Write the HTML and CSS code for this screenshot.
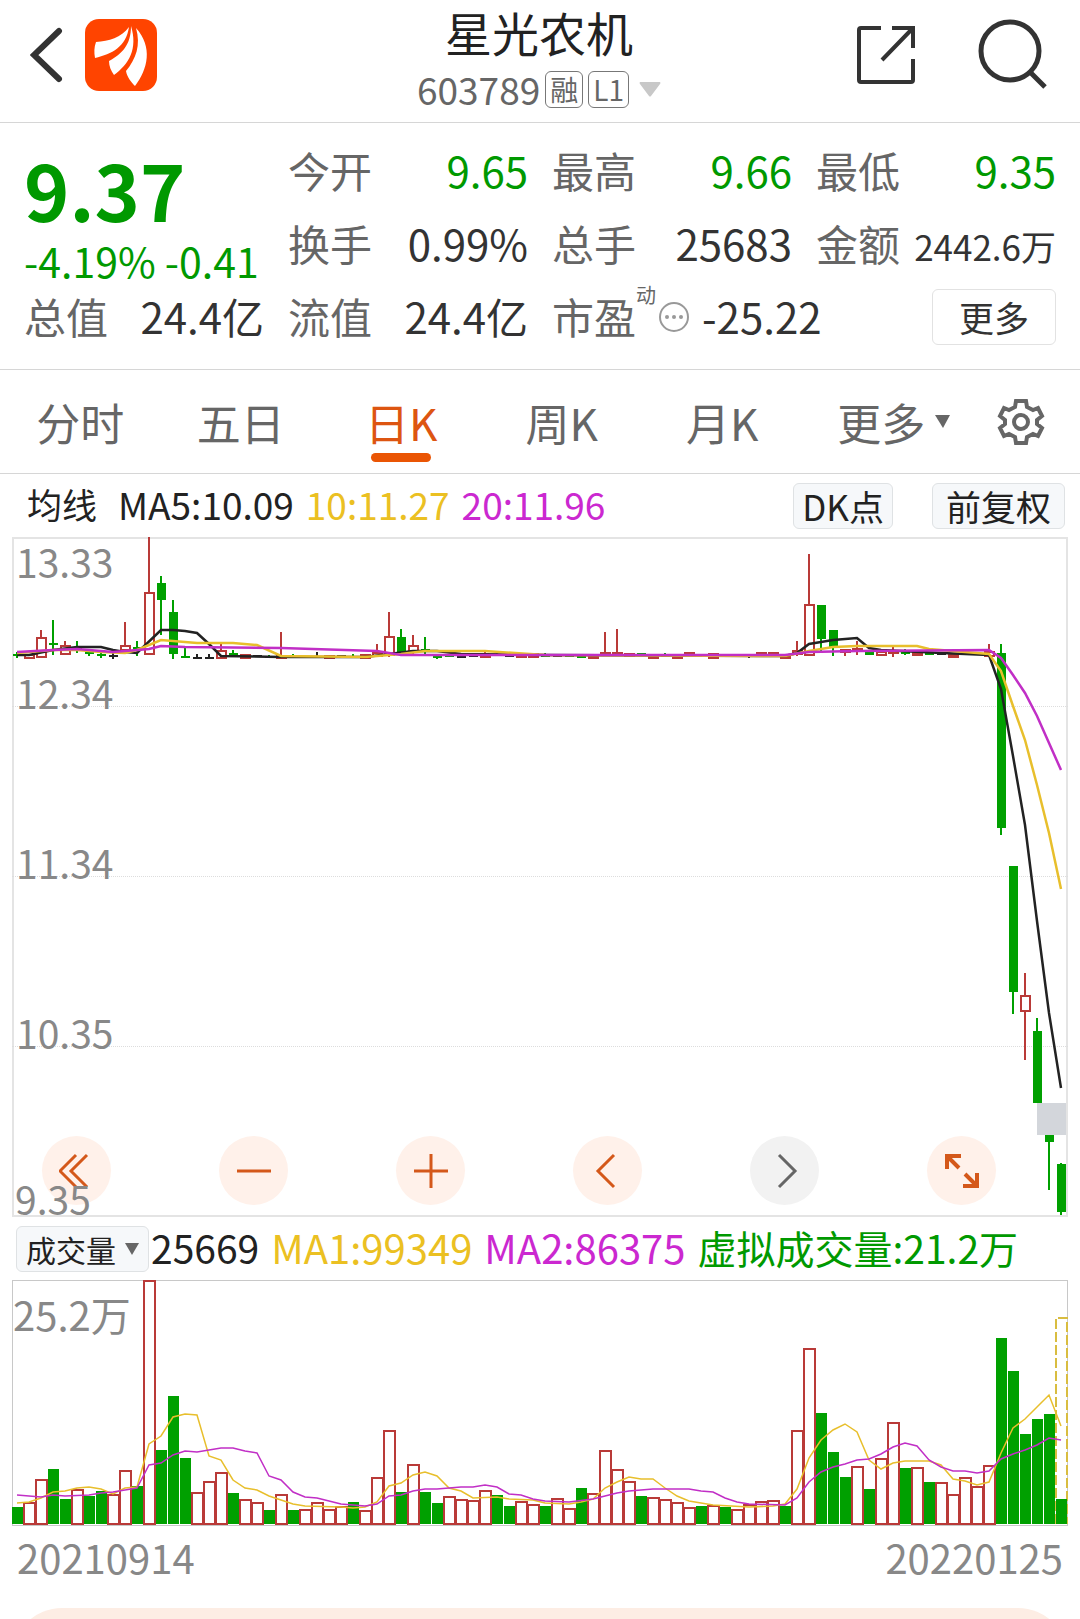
FILE: index.html
```
<!DOCTYPE html>
<html lang="zh-CN">

<head>
  <meta charset="utf-8">
  <meta name="viewport" content="width=device-width, initial-scale=1">
  <title>星光农机 603789</title>
  <link rel="stylesheet" href="styles.css">
</head>

<body>
  <header class="top-bar">
    <div class="top-left">
      <button class="icon-btn" aria-label="返回">
        <svg width="34" height="56" viewBox="0 0 34 56"><path d="M29 4 4 28 29 52" fill="none" stroke="#333" stroke-width="6" stroke-linecap="round" stroke-linejoin="miter"/></svg>
      </button>
      <a class="logo" href="#" aria-label="首页">
        <svg width="72" height="72" viewBox="0 0 72 72">
          <rect width="72" height="72" rx="14" fill="#ff4400"/>
          <path d="M44 8C36 19 24 22 11 23 9 28 9 34 10 39 27 35 41 28 44 8Z" fill="#fff"/>
          <path d="M46 7C46 26 37 35 24 42 24 47 26 52 29 56 44 45 53 30 46 7Z" fill="#fff"/>
          <path d="M51 9C56 26 51 40 41 52 42 58 46 63 50 67 63 50 68 28 51 9Z" fill="#fff"/>
        </svg>
      </a>
    </div>
    <div class="stock">
      <h1>星光农机</h1>
      <div class="stock-code">
        <span>603789</span>
        <span class="tag">融</span>
        <span class="tag">L1</span>
        <svg class="code-arrow" width="22" height="15" viewBox="0 0 22 15"><path d="M1 0h20q1 1 0 2L12 14q-1 1-2 0L1 2q-1-1 0-2z" fill="#c8c8c8"/></svg>
      </div>
    </div>
    <div class="top-right">
      <button class="icon-btn" aria-label="分享">
        <svg width="60" height="60" viewBox="0 0 60 60" fill="none" stroke="#333" stroke-width="4"><path d="M25 3H5Q3 3 3 5V55Q3 57 5 57H55Q57 57 57 55V34M36 3H57V23M57 3 26 35"/></svg>
      </button>
      <button class="icon-btn" aria-label="搜索">
        <svg width="70" height="72" viewBox="0 0 70 72" fill="none" stroke="#333" stroke-width="5"><circle cx="32" cy="32" r="29"/><path d="M52 53 67 68"/></svg>
      </button>
    </div>
  </header>

  <section class="quote">
    <div class="price">
      <strong>9.37</strong>
      <span>-4.19% -0.41</span>
    </div>
    <div class="cell"><span>今开</span><b class="down">9.65</b></div>
    <div class="cell"><span>最高</span><b class="down">9.66</b></div>
    <div class="cell"><span>最低</span><b class="down">9.35</b></div>
    <div class="cell"><span>换手</span><b>0.99%</b></div>
    <div class="cell"><span>总手</span><b>25683</b></div>
    <div class="cell"><span>金额</span><b class="small">2442.6万</b></div>
    <div class="cell"><span>总值</span><b>24.4亿</b></div>
    <div class="cell"><span>流值</span><b>24.4亿</b></div>
    <div class="cell pe">
      <span>市盈</span><sup>动</sup>
      <svg width="32" height="32" viewBox="0 0 32 32"><circle cx="16" cy="16" r="14" fill="none" stroke="#999" stroke-width="2"/><g fill="#999"><circle cx="9" cy="16" r="2"/><circle cx="16" cy="16" r="2"/><circle cx="23" cy="16" r="2"/></g></svg>
      <b>-25.22</b>
      <button class="more-btn">更多</button>
    </div>
  </section>

  <nav class="tabs">
    <button>分时</button>
    <button>五日</button>
    <button class="active">日K</button>
    <button>周K</button>
    <button>月K</button>
    <button class="has-arrow">更多<svg width="15" height="13" viewBox="0 0 15 13"><path d="M0 0H15L8 13Z" fill="#666"/></svg></button>
    <button class="gear" aria-label="设置">
      <svg width="48" height="48" viewBox="0 0 48 48" fill="none" stroke="#666" stroke-width="4">
        <path d="M19 3H29L30 9 36 12 41 10 45 18 40 22V26L45 30 41 38 36 36 30 39 29 45H19L18 39 12 36 7 38 3 30 8 26V22L3 18 7 10 12 12 18 9Z"/>
        <circle cx="24" cy="24" r="7"/>
      </svg>
    </button>
  </nav>

  <div class="legend">
    <span class="legend-name">均线</span>
    <span>MA5:10.09</span>
    <span class="yellow">10:11.27</span>
    <span class="purple">20:11.96</span>
    <button class="chip push">DK点</button>
    <button class="chip">前复权</button>
  </div>

  <div class="plot k-plot">
    <div class="scale">
      <div><span>13.33</span><span>12.34</span></div>
      <div><span>11.34</span></div>
      <div><span>10.35</span></div>
      <div></div>
    </div>
    <svg id="kChart" viewBox="0 0 1056 680" preserveAspectRatio="none"></svg>
    <div class="tools">
      <button aria-label="最早"><svg viewBox="0 0 36 36"><path d="M17 2 1 18 17 34M28 2 12 18 28 34"/></svg></button>
      <button aria-label="缩小"><svg viewBox="0 0 36 36"><path d="M1 18H35"/></svg></button>
      <button aria-label="放大"><svg viewBox="0 0 36 36"><path d="M1 18H35M18 1V35"/></svg></button>
      <button aria-label="向左"><svg viewBox="0 0 36 36"><path d="M24 2 8 18 24 34"/></svg></button>
      <button class="disabled" aria-label="向右"><svg viewBox="0 0 36 36"><path d="M12 2 28 18 12 34"/></svg></button>
      <button aria-label="全屏"><svg viewBox="0 0 36 36"><path d="M3 16V3H17M3 3 15 15M33 20V33H19M33 33 21 21" stroke-width="4"/></svg></button>
    </div>
    <span class="low-label">9.35</span>
  </div>

  <div class="legend vol-legend">
    <button class="chip vol-chip">成交量<svg width="14" height="12" viewBox="0 0 14 12"><path d="M0 0H14L7 12Z" fill="#666"/></svg></button>
    <span>25669</span>
    <span class="yellow">MA1:99349</span>
    <span class="purple">MA2:86375</span>
    <span class="down">虚拟成交量:21.2万</span>
  </div>

  <div class="plot vol-plot">
    <span class="vol-max">25.2万</span>
    <svg id="volChart" viewBox="0 0 1056 246" preserveAspectRatio="none"></svg>
  </div>

  <div class="dates">
    <span>20210914</span>
    <span>20220125</span>
  </div>

  <div class="sheet"><div class="sheet-body"></div></div>

  <script src="chart.js"></script>
</body>

</html>
```
FILE: styles.css
```
* {
  box-sizing: border-box;
}

body {
  margin: 0;
  height: 100vh;
  display: flex;
  flex-direction: column;
  overflow-x: hidden;
  background: #fff;
  color: #222;
  font-family: "Noto Sans CJK SC", "Noto Sans", sans-serif;
}

button {
  font-family: inherit;
  color: inherit;
  border: 0;
  padding: 0;
  background: none;
  cursor: pointer;
}

svg {
  display: block;
  flex: none;
}

.down {
  color: #009900;
}

.yellow {
  color: #ebc022;
}

.purple {
  color: #cb28d0;
}

/* header */
.top-bar {
  flex: none;
  display: grid;
  grid-template-columns: 1fr auto 1fr;
  height: 123px;
  padding: 0 32px 0 30px;
  border-bottom: 1px solid #d6d6d6;
}

.top-left,
.top-right {
  display: flex;
  align-items: center;
  height: 110px;
}

.top-left {
  gap: 21px;
}

.top-right {
  justify-content: flex-end;
  gap: 62px;
}

.stock {
  text-align: center;
}

.stock h1 {
  margin: 0;
  font-size: 47px;
  line-height: 63px;
  font-weight: 400;
}

.stock-code {
  display: flex;
  align-items: center;
  justify-content: center;
  gap: 5px;
  height: 52px;
  font-size: 37px;
  line-height: 50px;
  color: #666;
}

.tag {
  min-width: 37px;
  height: 37px;
  padding: 0 4px;
  border: 1px solid #777;
  border-radius: 6px;
  font-size: 28px;
  line-height: 34px;
}

.code-arrow {
  margin-left: 5px;
}

/* quote numbers */
.quote {
  flex: none;
  display: grid;
  grid-template-columns: repeat(4, 1fr);
  grid-auto-rows: 73px;
  column-gap: 24px;
  height: 247px;
  padding: 10px 24px 0;
  border-bottom: 1px solid #d6d6d6;
  font-size: 42px;
  line-height: 73px;
}

.price {
  grid-row: span 2;
  display: flex;
  flex-direction: column;
  padding-top: 4px;
  color: #009900;
  white-space: nowrap;
}

.price strong {
  font-size: 77px;
  line-height: 104px;
  font-weight: 700;
}

.price span {
  font-size: 41px;
  line-height: 38px;
}

.cell {
  display: flex;
  align-items: baseline;
  justify-content: space-between;
  white-space: nowrap;
  color: #666;
}

.cell b {
  font-weight: 400;
  color: #333;
}

.cell b.down {
  color: #009900;
}

.cell b.small {
  font-size: 35px;
}

.pe {
  grid-column: span 2;
  justify-content: flex-start;
}

.pe sup {
  align-self: flex-start;
  padding-right: 2px;
  font-size: 20px;
  line-height: 32px;
}

.pe svg,
.more-btn {
  align-self: center;
  margin-top: 3px;
}

.pe b {
  margin-left: 12px;
}

.more-btn {
  width: 124px;
  height: 56px;
  margin-left: auto;
  border: 1px solid #e2e2e2;
  border-radius: 6px;
  font-size: 35px;
  line-height: 48px;
  color: #333;
}

/* period tabs */
.tabs {
  flex: none;
  display: grid;
  grid-template-columns: repeat(6, 1fr) 117px;
  height: 104px;
  border-bottom: 1px solid #d6d6d6;
}

.tabs button {
  position: relative;
  font-size: 44px;
  line-height: 60px;
  color: #666;
}

.tabs .active {
  color: #dd5511;
}

.tabs .active::after {
  content: "";
  position: absolute;
  left: 50%;
  bottom: 11px;
  width: 60px;
  height: 9px;
  margin-left: -30px;
  border-radius: 5px;
  background: #ea5504;
}

.tabs .has-arrow {
  display: flex;
  align-items: center;
  justify-content: center;
  gap: 10px;
  padding-left: 22px;
}

.tabs .gear {
  padding-left: 34px;
}

/* legend lines above the charts */
.legend {
  flex: none;
  display: flex;
  align-items: center;
  gap: 12px;
  height: 63px;
  padding: 0 15px 3px 27px;
  font-size: 37px;
  line-height: 46px;
  white-space: nowrap;
}

.legend-name {
  margin-right: 9px;
  font-size: 35px;
}

.chip {
  height: 46px;
  margin-top: 3px;
  padding: 0 8px;
  border: 1px solid #dfe2e4;
  border-radius: 6px;
  background: #f6f8fa;
  font-size: 35px;
  line-height: 40px;
}

.push {
  margin-left: auto;
  margin-right: 27px;
}

.chip:last-child {
  padding: 0 13px;
}

.vol-legend {
  padding-left: 16px;
  font-size: 39px;
}

.vol-chip {
  display: flex;
  align-items: center;
  gap: 9px;
  margin-right: -10px;
  padding: 0 9px;
  font-size: 30px;
}

.vol-legend .yellow,
.vol-legend .purple {
  font-size: 40px;
}

/* charts */
.plot {
  position: relative;
  flex: none;
  margin: 0 12px;
  color: #888;
}

.plot > svg {
  position: relative;
  width: 100%;
  height: 100%;
}

.k-plot {
  height: 680px;
  box-shadow: inset 0 0 0 2px #e4e4e4;
}

.scale {
  position: absolute;
  inset: 0;
  display: grid;
  grid-template-rows: repeat(4, 1fr);
  font-size: 39px;
  line-height: 28px;
}

.scale div {
  display: flex;
  flex-direction: column;
  justify-content: flex-end;
  padding-left: 4px;
  border-bottom: 1px dotted #ddd;
}

.scale div:first-child {
  justify-content: space-between;
  padding-top: 10px;
}

.scale div:last-child {
  border: 0;
}

.low-label {
  position: absolute;
  left: 3px;
  bottom: 0;
  font-size: 39px;
  line-height: 38px;
  pointer-events: none;
}

.tools {
  position: absolute;
  left: 30px;
  right: 72px;
  bottom: 12px;
  display: flex;
  justify-content: space-between;
}

.tools button {
  display: grid;
  place-items: center;
  width: 69px;
  height: 69px;
  border-radius: 50%;
  background: #fff1ea;
}

.tools .disabled {
  background: #f2f2f2;
}

.tools svg {
  width: 36px;
  height: 36px;
  fill: none;
  stroke: #d4581a;
  stroke-width: 3;
}

.tools .disabled svg {
  stroke: #666;
}

.vol-plot {
  height: 246px;
  box-shadow: inset 0 0 0 1px #c8c8c8;
}

.vol-max {
  position: absolute;
  left: 1px;
  top: 6px;
  font-size: 40px;
  line-height: 56px;
}

.dates {
  flex: none;
  display: flex;
  justify-content: space-between;
  height: 82px;
  padding: 0 17px;
  font-size: 40px;
  line-height: 62px;
  color: #888;
}

/* panel peeking in from the bottom */
.sheet {
  flex: 1;
  min-height: 11px;
  overflow: hidden;
  padding: 0 12px;
}

.sheet-body {
  height: 100px;
  border-radius: 50px;
  background: #fdede4;
}
```
FILE: chart.js
```
const RED = '#b93a38';
const GREEN = '#00a000';
const BLACK = '#222';
const YELLOW = '#e8bf2c';
const PURPLE = '#c12fc6';
const STEP = 12;

// kind, high, body top, body bottom, low
const candles = [
  ['g', 115, 117, 119, 121], ['r', 118, 118, 121, 121], ['r', 93, 101, 120, 121], ['g', 83, 106, 108, 118],
  ['r', 104, 109, 117, 118], ['g', 104, 110, 112, 116], ['g', 113, 115, 117, 119], ['g', 115, 117, 119, 121],
  ['k', 116, 118, 120, 122], ['r', 85, 109, 113, 113], ['g', 104, 110, 112, 119], ['r', 0, 56, 117, 117],
  ['g', 39, 46, 63, 98], ['g', 63, 75, 117, 122], ['g', 110, 119, 121, 121], ['k', 117, 120, 122, 122],
  ['k', 117, 120, 122, 122], ['r', 107, 114, 121, 121], ['g', 113, 116, 119, 119], ['r', 118, 118, 121, 121],
  ['k', 118, 118, 120, 120], ['g', 118, 119, 121, 121], ['r', 95, 119, 121, 121], ['g', 117, 119, 121, 121],
  ['k', 119, 119, 121, 121], ['k', 115, 119, 121, 121], ['r', 118, 119, 121, 121], ['k', 118, 118, 120, 120],
  ['g', 117, 119, 121, 121], ['r', 117, 118, 121, 121], ['r', 107, 116, 119, 119], ['r', 75, 100, 118, 120],
  ['g', 92, 100, 117, 117], ['r', 98, 109, 114, 118], ['g', 100, 112, 114, 118], ['g', 118, 119, 121, 122],
  ['g', 117, 118, 120, 120], ['k', 119, 119, 121, 121], ['k', 118, 118, 120, 120], ['r', 114, 118, 120, 121],
  ['g', 114, 117, 119, 119], ['k', 118, 118, 120, 120], ['r', 117, 117, 120, 120], ['r', 117, 117, 120, 120],
  ['g', 116, 118, 120, 120], ['k', 118, 118, 120, 120], ['g', 118, 118, 120, 120], ['g', 119, 119, 121, 121],
  ['r', 119, 119, 121, 121], ['r', 95, 116, 118, 118], ['r', 92, 116, 118, 119], ['r', 117, 117, 119, 119],
  ['g', 116, 116, 118, 118], ['r', 119, 119, 121, 121], ['g', 116, 118, 120, 120], ['r', 119, 119, 121, 121],
  ['r', 116, 116, 119, 119], ['k', 117, 118, 120, 120], ['r', 116, 117, 121, 121], ['k', 118, 118, 120, 120],
  ['g', 117, 118, 120, 120], ['k', 117, 118, 120, 121], ['r', 116, 116, 118, 118], ['r', 116, 116, 119, 119],
  ['r', 119, 119, 121, 121], ['r', 104, 114, 117, 119], ['r', 17, 68, 118, 118], ['g', 68, 68, 102, 116],
  ['g', 93, 93, 110, 119], ['r', 112, 113, 115, 119], ['r', 104, 112, 114, 118], ['g', 113, 115, 118, 118],
  ['r', 115, 115, 118, 118], ['r', 110, 114, 116, 120], ['g', 112, 115, 117, 118], ['r', 115, 116, 118, 118],
  ['g', 115, 116, 118, 118], ['k', 116, 116, 118, 118], ['r', 117, 118, 120, 120], ['k', 115, 116, 118, 118],
  ['k', 115, 116, 118, 118], ['r', 107, 115, 119, 119], ['g', 107, 116, 291, 298], ['g', 329, 329, 455, 477],
  ['r', 436, 459, 474, 523], ['g', 481, 494, 566, 566], ['g', 566, 570, 605, 653], ['g', 626, 627, 675, 678]
];

const volumes = [
  17, 22, 45, 55, 25, 35, 28, 33, 30, 54, 38, 244, 74, 128, 66, 32, 43, 52, 31, 25, 22, 14, 30, 14, 15, 22, 15, 18, 22,
  14, 47, 94, 32, 60, 32, 21, 28, 25, 24, 34, 29, 18, 23, 20, 18, 26, 16, 36, 31, 74, 55, 43, 28, 27, 25, 22, 17, 18, 19,
  17, 15, 20, 23, 24, 18, 94, 176, 111, 72, 47, 58, 35, 66, 102, 56, 57, 42, 42, 30, 47, 38, 59, 186, 153, 90, 105, 110, 25
];
// days that closed lower
const fallDays = [0, 3, 4, 6, 7, 10, 12, 13, 14, 18, 21, 23, 28, 32, 34, 35, 40, 41, 44, 47, 52, 57, 59, 64, 67, 68, 69, 71, 74, 76, 82, 83, 84, 85, 86, 87];

// moving averages: day index, y
const ma5 = [[0, 118], [1, 118], [3, 113], [5, 110], [6, 110], [7, 110], [8, 113], [9, 115], [10, 116], [12, 93], [13, 93], [14, 94], [15, 96], [16, 107], [17, 119], [22, 120], [29, 120], [31, 117], [33, 114], [35, 114], [37, 117], [44, 118], [64, 119], [65, 116], [66, 107], [67, 105], [68, 103], [70, 101], [71, 111], [72, 113], [77, 116], [81, 118], [82, 152], [83, 219], [84, 288], [85, 384], [86, 476], [87, 551]];
const ma10 = [[0, 116], [3, 113], [5, 113], [7, 115], [9, 116], [10, 113], [12, 103], [15, 106], [18, 106], [20, 108], [22, 119], [29, 120], [32, 117], [34, 114], [39, 114], [44, 118], [64, 119], [66, 114], [68, 110], [70, 109], [75, 109], [76, 112], [81, 117], [82, 134], [83, 169], [84, 203], [85, 248], [86, 296], [87, 352]];
const ma20 = [[0, 115], [3, 113], [5, 112], [8, 115], [11, 112], [12, 109], [14, 110], [22, 111], [30, 114], [32, 118], [64, 118], [66, 115], [70, 114], [81, 113], [82, 121], [83, 138], [84, 156], [85, 179], [86, 206], [87, 233]];

const volMa1 = [[0, 223], [1, 222], [2, 218], [3, 212], [4, 211], [5, 208], [6, 207], [7, 209], [8, 214], [9, 208], [10, 207], [11, 164], [12, 156], [13, 137], [14, 134], [15, 135], [16, 176], [17, 180], [18, 200], [19, 208], [20, 210], [21, 216], [22, 220], [23, 224], [24, 226], [27, 227], [28, 228], [29, 227], [30, 222], [31, 206], [32, 203], [33, 195], [34, 192], [35, 196], [36, 208], [37, 211], [38, 218], [40, 217], [41, 219], [43, 220], [44, 223], [46, 224], [47, 222], [48, 219], [49, 208], [50, 202], [51, 197], [52, 199], [53, 199], [54, 208], [55, 216], [56, 221], [57, 223], [58, 225], [61, 227], [63, 226], [64, 224], [65, 209], [66, 178], [67, 160], [68, 150], [69, 144], [70, 152], [71, 180], [72, 189], [73, 183], [74, 181], [76, 181], [77, 185], [78, 199], [79, 201], [80, 205], [81, 202], [82, 173], [83, 148], [84, 139], [85, 127], [86, 115], [87, 146]];
const volMa2 = [[0, 215], [2, 217], [3, 215], [4, 216], [6, 215], [7, 213], [8, 212], [9, 210], [10, 208], [11, 185], [12, 183], [13, 175], [14, 171], [15, 172], [16, 170], [17, 168], [18, 168], [19, 171], [20, 173], [21, 196], [22, 200], [23, 212], [24, 217], [25, 218], [26, 221], [27, 224], [28, 225], [29, 226], [30, 224], [31, 216], [32, 215], [33, 211], [34, 209], [35, 209], [37, 207], [38, 207], [39, 205], [40, 207], [41, 214], [42, 215], [43, 219], [44, 221], [46, 222], [48, 219], [49, 216], [50, 213], [51, 211], [53, 209], [56, 209], [57, 211], [58, 212], [59, 218], [60, 222], [61, 224], [64, 225], [65, 218], [66, 202], [67, 192], [68, 187], [69, 184], [70, 180], [71, 179], [72, 174], [73, 167], [74, 163], [75, 166], [76, 180], [77, 187], [78, 191], [79, 191], [80, 193], [81, 191], [82, 179], [83, 174], [84, 170], [85, 165], [86, 158], [87, 160]];

function line(points, color, width) {
  const path = points.map(([i, y]) => `${i * STEP + 5},${y}`).join(' ');
  return `<polyline points="${path}" fill="none" stroke="${color}" stroke-width="${width}"/>`;
}

function drawCandles() {
  let out = '';
  candles.forEach(([kind, high, top, bottom, low], i) => {
    const x = i * STEP + 5;
    const color = kind === 'r' ? RED : kind === 'g' ? GREEN : BLACK;
    out += `<path d="M${x} ${high}V${top}M${x} ${bottom}V${low}" stroke="${color}" stroke-width="2"/>`;
    if (kind === 'r') {
      out += `<rect x="${x - 4}" y="${top}" width="9" height="${bottom - top}" fill="#fff" stroke="${color}" stroke-width="2"/>`;
    } else {
      out += `<rect x="${x - 4}" y="${top}" width="9" height="${bottom - top}" fill="${color}"/>`;
    }
  });
  out += '<rect x="1025" y="566" width="29" height="32" fill="#d3d6db"/>';
  out += line(ma5, BLACK, 2.5) + line(ma10, YELLOW, 2.5) + line(ma20, PURPLE, 2.5);
  document.getElementById('kChart').innerHTML = out;
}

function drawVolumes() {
  const base = 244;
  let out = '';
  // projected volume of the current day
  out += `<path d="M1044 244V38H1055V244" fill="none" stroke="#d9bd40" stroke-width="2" stroke-dasharray="10 3"/>`;
  volumes.forEach((v, i) => {
    const x = i * STEP;
    if (fallDays.includes(i)) {
      out += `<rect x="${x}" y="${base - v}" width="11" height="${v}" fill="${GREEN}"/>`;
    } else {
      out += `<rect x="${x}" y="${base - v + 1}" width="11" height="${v - 1}" fill="#fff" stroke="${RED}" stroke-width="2"/>`;
    }
  });
  out += line(volMa1, YELLOW, 1.5) + line(volMa2, PURPLE, 1.5);
  document.getElementById('volChart').innerHTML = out;
}

drawCandles();
drawVolumes();
```
